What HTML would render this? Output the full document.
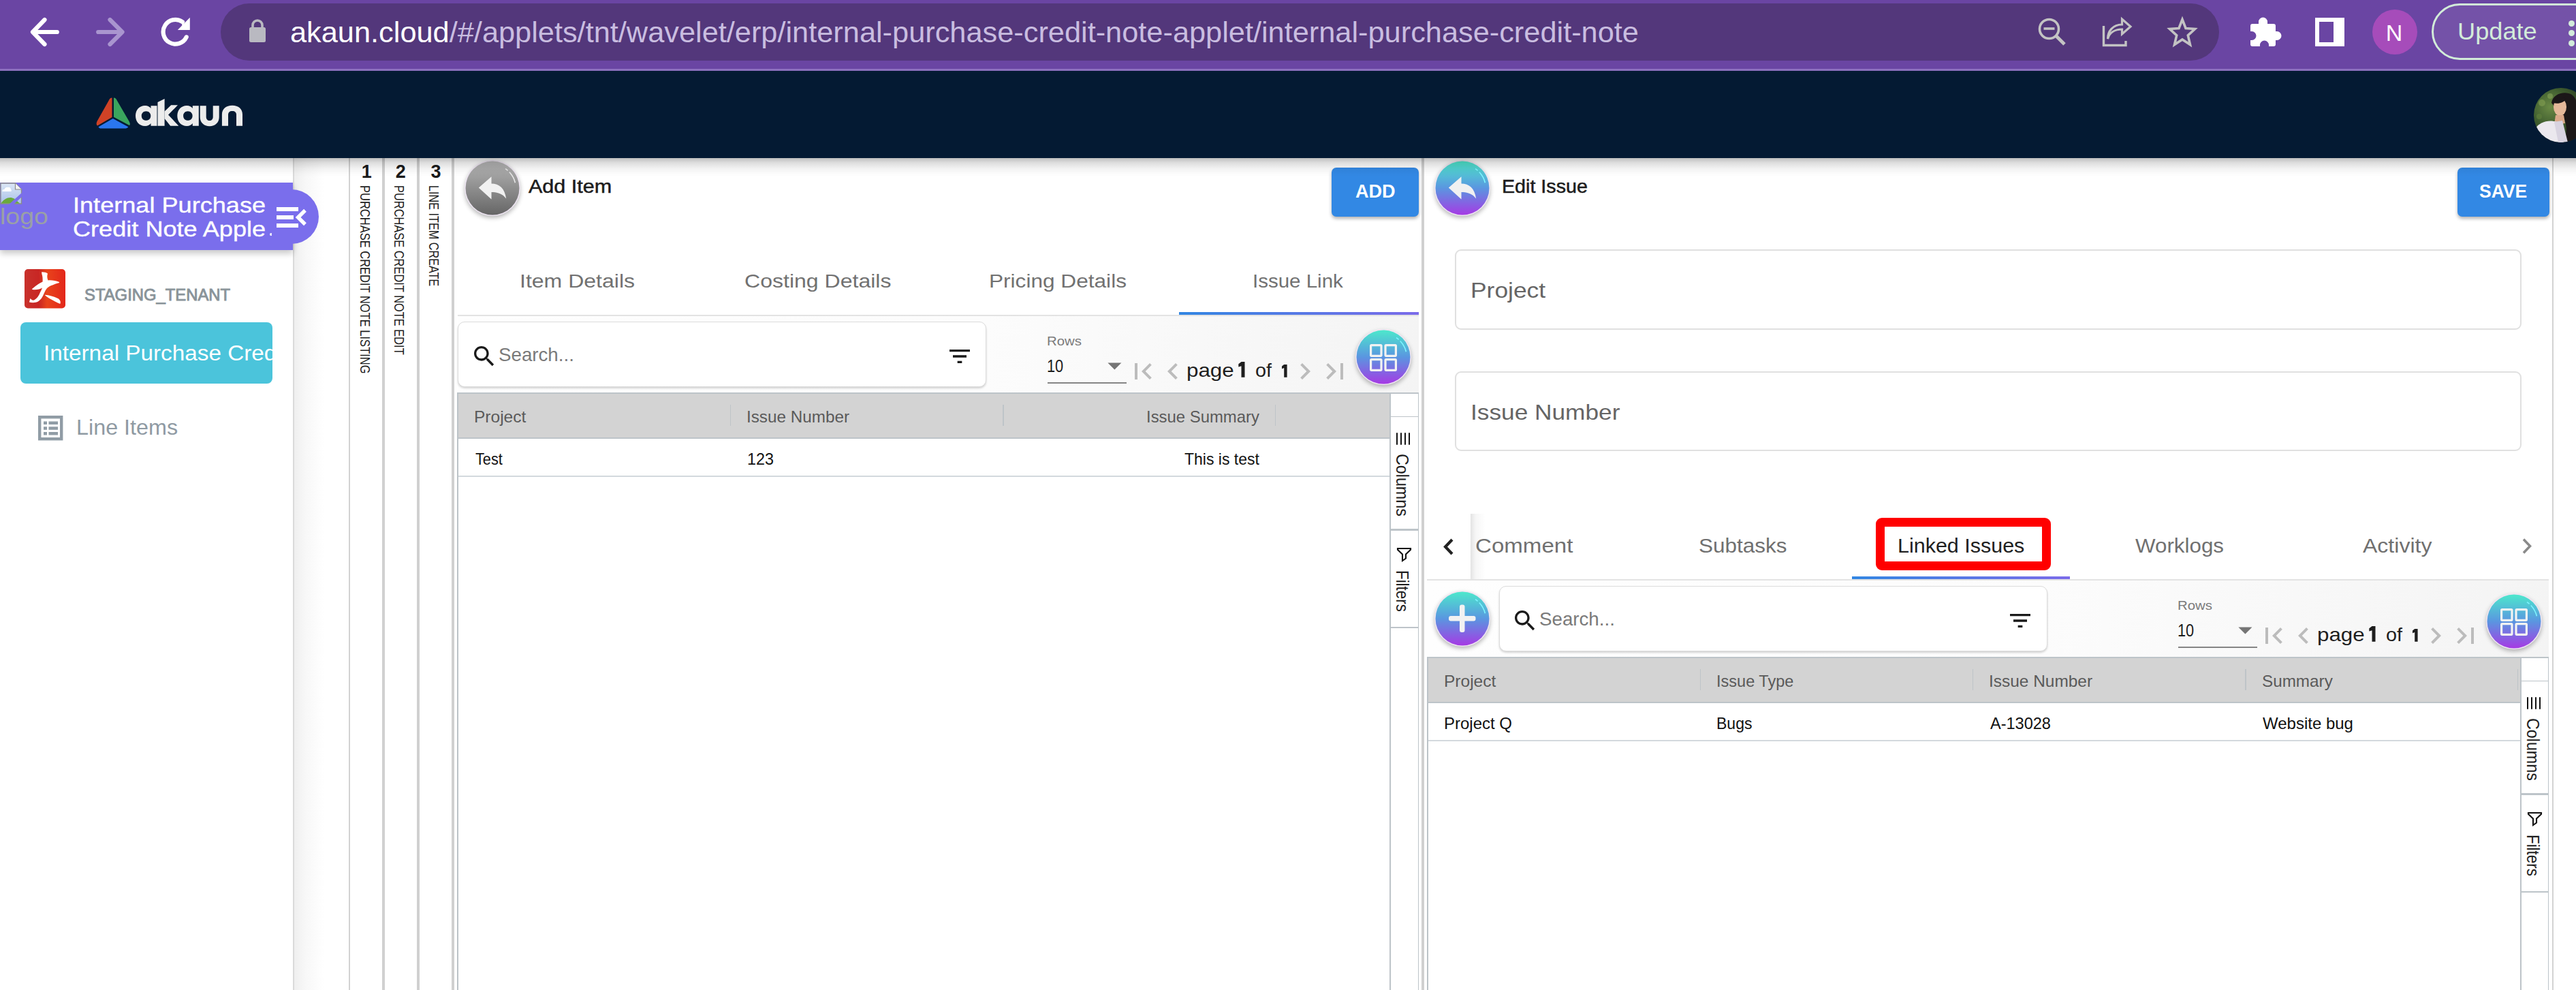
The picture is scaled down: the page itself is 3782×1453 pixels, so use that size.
<!DOCTYPE html>
<html><head><meta charset="utf-8"><title>akaun</title>
<style>
html,body{margin:0;padding:0;width:3782px;height:1453px;overflow:hidden;background:#fff;position:relative;font-family:"Liberation Sans",sans-serif}
.a{position:absolute;box-sizing:border-box}
.t{white-space:pre}
</style></head><body>
<div class="a " style="left:0px;top:0px;width:3782px;height:101px;background:#6a45a3"></div>
<div class="a " style="left:0px;top:101px;width:3782px;height:3px;background:#8c70be"></div>
<div class="a " style="left:324px;top:5px;width:2934px;height:84px;background:#53377b;border-radius:42px"></div>
<svg class="a" style="left:40px;top:22px;" width="52" height="50" viewBox="0 0 52 50"><path d="M43.8 25 H9 M25.5 7 L8 25 L25.5 43" fill="none" stroke="#fff" stroke-width="6.2" stroke-linecap="round" stroke-linejoin="round"/></svg>
<svg class="a" style="left:137px;top:22px;" width="52" height="50" viewBox="0 0 52 50"><path d="M7.2 25 H42 M24.5 7 L42.5 25 L24.5 43" fill="none" stroke="#a995cf" stroke-width="6.2" stroke-linecap="round" stroke-linejoin="round"/></svg>
<svg class="a" style="left:232px;top:22px;" width="52" height="50" viewBox="0 0 52 50"><path d="M36 10.2 A17.9 17.9 0 1 0 41.7 32.4" fill="none" stroke="#fff" stroke-width="6.2" stroke-linecap="round"/><path d="M46.8 3.8 V21.9 H28.8 Z" fill="#fff"/><path d="M34 8.5 L40 14.5 L36 18 Z" fill="#fff"/></svg>
<svg class="a" style="left:362px;top:26px;" width="32" height="40" viewBox="0 0 32 40"><path d="M9 15 V11 A7 7 0 0 1 23 11 V15" fill="none" stroke="#b9b9c1" stroke-width="3.6"/><rect x="4" y="14" width="24" height="22" rx="2.5" fill="#b9b9c1"/></svg>
<div class="a t" style="left:425.65px;top:25.59px;font-size:43.3px;line-height:43.3px;color:#c9bde0;font-weight:400;font-family:'Liberation Sans', sans-serif;transform:scaleX(1.0008);transform-origin:0 0;"><span style="color:#fff">akaun.cloud</span>/#/applets/tnt/wavelet/erp/internal-purchase-credit-note-applet/internal-purchase-credit-note</div>
<svg class="a" style="left:2991px;top:24.5px;" width="50" height="50" viewBox="0 0 50 50"><circle cx="17.5" cy="17.5" r="14" fill="none" stroke="#c3c3c3" stroke-width="3.6"/><path d="M9.5 17 H25.5" stroke="#c3c3c3" stroke-width="3.6"/><path d="M27.5 27.5 L40 40" stroke="#c3c3c3" stroke-width="5"/></svg>
<svg class="a" style="left:3084px;top:24px;" width="52" height="50" viewBox="0 0 52 50"><path d="M4.5 14 V42.5 H37 V36" fill="none" stroke="#c3c3c3" stroke-width="3.4"/><path d="M10.5 33 C13 24 21 19 31.5 19 V26 L44 15 L31.5 4 V12 C18 12 10.5 22 10.5 33 Z" fill="none" stroke="#c3c3c3" stroke-width="3.2" stroke-linejoin="miter"/></svg>
<svg class="a" style="left:3178px;top:22px;" width="52" height="52" viewBox="0 0 52 52"><path d="M26 6.5 L31 19.5 L44.5 20.5 L34.3 29.8 L37.5 43.5 L26 36 L14.5 43.5 L17.7 29.8 L7.5 20.5 L21 19.5 Z" fill="none" stroke="#c3c3c3" stroke-width="3.6" stroke-linejoin="miter"/></svg>
<svg class="a" style="left:3300px;top:20px;" width="52" height="52" viewBox="0 0 52 52"><path d="M4 18 C4 16 5 15 7 15 H16 V12 A6.5 6.5 0 0 1 29 12 V15 H38 C40 15 41 16 41 18 V26 H43 A6.5 6.5 0 0 1 43 39 H41 V45 C41 47 40 48 38 48 H31 V46 A6.5 6.5 0 0 0 18 46 V48 H7 C5 48 4 47 4 45 V39 H6 A6.5 6.5 0 0 0 6 26 H4 Z" fill="#fff"/></svg>
<div class="a " style="left:3399px;top:26px;width:43px;height:42px;background:#fff"></div>
<div class="a " style="left:3405px;top:32px;width:21px;height:30px;background:#6a45a3"></div>
<div class="a " style="left:3483px;top:14px;width:66px;height:66px;background:#a64cba;border-radius:50%"></div>
<div class="a t" style="left:3502.84px;top:30.60px;font-size:34px;line-height:34px;color:#ffffff;font-weight:400;font-family:'Liberation Sans', sans-serif;">N</div>
<div class="a " style="left:3570px;top:5px;width:260px;height:83px;background:#7452a8;border:3px solid #d2ecd9;border-radius:42px"></div>
<div class="a t" style="left:3608.34px;top:28.25px;font-size:35px;line-height:35px;color:#d3ecda;font-weight:400;font-family:'Liberation Sans', sans-serif;transform:scaleX(1.0343);transform-origin:0 0;">Update</div>
<div class="a " style="left:3771px;top:29.5px;width:9px;height:9px;background:#d3ecda;border-radius:50%"></div>
<div class="a " style="left:3771px;top:44.0px;width:9px;height:9px;background:#d3ecda;border-radius:50%"></div>
<div class="a " style="left:3771px;top:58.5px;width:9px;height:9px;background:#d3ecda;border-radius:50%"></div>
<div class="a " style="left:0px;top:104px;width:3782px;height:128px;background:#041a33"></div>
<svg class="a" style="left:138px;top:140px;" width="58" height="52" viewBox="0 0 58 52">
<path d="M26.5 3.5 C24 3.5 23 5 22 7 L4.5 38 C3 41 3.5 43.5 5 44.5 L26.5 32 Z" fill="#d04226"/>
<path d="M29 3.5 C31.5 3.5 32.5 5 33.5 7 L51.5 38 C53 41 53.5 43 52 44 L29 31.8 Z" fill="#3aa55e"/>
<path d="M27.8 34 L6.5 46.3 C7 48 8.5 48.6 11 48.6 H45 C47.5 48.6 49 48 50.3 46.2 Z" fill="#2a76ee"/>
</svg>
<svg class="a" style="left:196px;top:140px;" width="165" height="50" viewBox="0 0 165 50">
<g fill="#ececec">
<path d="M17 15 C8.5 15 3 21.5 3 30 C3 38.5 8.5 45 17 45 C21 45 24 43.2 25.5 41 V44.8 H34.5 V15.2 H25.5 V19 C24 16.8 21 15 17 15 Z M18.5 23.2 C22.5 23.2 25.3 26 25.3 30 C25.3 34 22.5 36.8 18.5 36.8 C14.5 36.8 11.8 34 11.8 30 C11.8 26 14.5 23.2 18.5 23.2 Z"/>
<path d="M35.5 10 L45.6 5 V44.8 H35.5 Z"/>
<path d="M45.6 23.5 L55.2 14.3 H65 L51 28.5 L66.3 44.8 H54.2 L45.6 34 Z"/>
<path transform="translate(6.3 0)" d="M72 15 C63.5 15 58 21.5 58 30 C58 38.5 63.5 45 72 45 C76 45 79 43.2 80.5 41 V44.8 H89.5 V15.2 H80.5 V19 C79 16.8 76 15 72 15 Z M73.5 23.2 C77.5 23.2 80.3 26 80.3 30 C80.3 34 77.5 36.8 73.5 36.8 C69.5 36.8 66.8 34 66.8 30 C66.8 26 69.5 23.2 73.5 23.2 Z"/>
<path transform="translate(6.2 0)" d="M91.5 15.2 H100.5 V31.5 C100.5 35 102.5 37 105.5 37 C108.5 37 110.5 35 110.5 31.5 V15.2 H119.5 V32 C119.5 40 113.5 45.2 105.5 45.2 C97.5 45.2 91.5 40 91.5 32 Z"/>
<path d="M129.9 44.8 V28 C129.9 20 136 14.8 145 14.8 C154 14.8 160 20 160 28 V44.8 H151 V28.5 C151 25 149 23 145 23 C141 23 139 25 139 28.5 V44.8 Z"/>
</g></svg>
<svg class="a" style="left:3720px;top:129px;" width="62" height="80" viewBox="0 0 62 80">
<defs><clipPath id="avc"><circle cx="40" cy="40" r="40"/></clipPath>
<radialGradient id="avbg" cx="0.3" cy="0.35" r="0.7"><stop offset="0" stop-color="#6b8a45"/><stop offset="0.5" stop-color="#3f5d2f"/><stop offset="1" stop-color="#26361f"/></radialGradient></defs>
<g clip-path="url(#avc)">
<rect x="0" y="0" width="80" height="80" fill="url(#avbg)"/>
<circle cx="12" cy="22" r="5" fill="#7d9a4e" opacity="0.7"/><circle cx="24" cy="12" r="4" fill="#86a356" opacity="0.6"/><circle cx="8" cy="42" r="4" fill="#5e7d3c" opacity="0.7"/>
<path d="M26 22 C28 8 46 4 56 10 C64 16 66 30 64 44 C64 60 70 70 74 80 H44 C50 66 48 52 44 44 Z" fill="#1b1718"/>
<ellipse cx="38.5" cy="28" rx="9.5" ry="13" fill="#e4b899"/>
<path d="M32 40 L44 40 L46 52 L30 54 Z" fill="#d9a889"/>
<path d="M2 60 C8 50 22 46 34 50 L44 80 H0 Z" fill="#ebe8ee"/>
<path d="M30 50 L42 48 L50 80 H36 Z" fill="#d8d3e0"/>
<path d="M28 22 C30 14 40 12 48 16 C44 22 36 24 28 22 Z" fill="#1b1718"/>
</g></svg>
<div class="a " style="left:0px;top:232px;width:431px;height:1221px;background:#fff"></div>
<div class="a " style="left:430px;top:232px;width:1.5px;height:1221px;background:#dadada"></div>
<div class="a " style="left:431.5px;top:232px;width:44px;height:1221px;background:linear-gradient(90deg,#efefef,#f8f8f8 40%,rgba(255,255,255,0))"></div>
<div class="a " style="left:0px;top:268px;width:430px;height:99px;background:#7a6eec;box-shadow:0 5px 9px rgba(0,0,0,0.22)"></div>
<div class="a " style="left:388px;top:277.5px;width:80px;height:80px;background:#7a6eec;border-radius:50%"></div>
<div class="a " style="left:0px;top:268px;width:430px;height:99px;background:#7a6eec"></div>
<svg class="a" style="left:0px;top:267px;" width="34" height="34" viewBox="0 0 34 34">
<defs><linearGradient id="bi" x1="0" y1="0" x2="0" y2="1"><stop offset="0" stop-color="#dbe6f6"/><stop offset="1" stop-color="#a9c1e8"/></linearGradient></defs>
<path d="M1 2 H22.5 L31.5 11 V32 H1 Z" fill="url(#bi)" stroke="#8a8a8a" stroke-width="1.3"/>
<path d="M22.5 2 V11 H31.5" fill="#f4f4f4" stroke="#8a8a8a" stroke-width="1.2"/>
<path d="M3.5 14 C3 12 4.5 10.5 6.5 11 C7 8.5 9.5 7 12 8 C13.5 7 16 8.5 16 11 C17 11.5 17 13.5 16 14 Z" fill="#fff"/>
<path d="M1.5 31.5 C5 26 10 23 15 23 C19 23 23 25.5 25 28 L29 31.5 Z" fill="#6aaa3c"/>
<path d="M13 33 L32 16 V22 L20 33 Z" fill="#7a6eec"/>
</svg>
<div class="a t" style="left:-0.34px;top:300.95px;font-size:33px;line-height:33px;color:#9aa0a6;font-weight:400;font-family:'Liberation Sans', sans-serif;transform:scaleX(1.1358);transform-origin:0 0;">logo</div>
<div class="a t" style="left:107.48px;top:284.80px;font-size:32px;line-height:32px;color:#ffffff;font-weight:400;font-family:'Liberation Sans', sans-serif;transform:scaleX(1.1287);transform-origin:0 0;-webkit-text-stroke:0.35px #fff;">Internal Purchase</div>
<div class="a t" style="left:107.48px;top:319.80px;font-size:32px;line-height:32px;color:#ffffff;font-weight:400;font-family:'Liberation Sans', sans-serif;transform:scaleX(1.1287);transform-origin:0 0;-webkit-text-stroke:0.35px #fff;">Credit Note Apple</div>
<div class="a" style="left:396px;top:341.5px;width:3px;height:4px;background:#fff;border-radius:50% 0 0 50%;opacity:.85"></div>
<div class="a " style="left:405.8px;top:304px;width:32.2px;height:5.6px;background:#fff"></div>
<div class="a " style="left:405.8px;top:316.3px;width:25px;height:5.6px;background:#fff"></div>
<div class="a " style="left:405.8px;top:328px;width:32.2px;height:5.6px;background:#fff"></div>
<svg class="a" style="left:430px;top:302px;" width="24" height="34" viewBox="0 0 24 34"><path d="M18 6.8 L7.6 17 L18 27.2" fill="none" stroke="#fff" stroke-width="5.4"/></svg>
<svg class="a" style="left:36px;top:395px;" width="60" height="58" viewBox="0 0 60 58">
<defs><linearGradient id="tl" x1="0" y1="0" x2="1" y2="0"><stop offset="0" stop-color="#c8312c"/><stop offset="0.35" stop-color="#c82624"/><stop offset="0.55" stop-color="#e8441c"/><stop offset="1" stop-color="#e3261a"/></linearGradient></defs>
<rect x="0" y="0" width="60" height="57.5" rx="5" fill="url(#tl)"/>
<path d="M25.1 4.4 C28.5 4.2 32 5 34 6.5 C33 9 33 13 34.5 16.5 C40 16 46 17 51 19 L51 20 C44 22 37 24.5 33.5 27.5 C31 30 30 33 28.5 36 C26.5 41 24 45 20 47.5 C16.5 49.5 11 49.5 7 48.5 C7.5 46 8 44.5 8.5 43 C10 45 12 46 14 45.5 C18 43.5 21 39 23 34 C24.5 31 25.5 29 26 27.5 C23 29.5 15 31.5 10.7 29.5 C14 26.5 20 21.5 26.6 18.5 C26.8 14 26.5 10 25.5 7.5 Z" fill="#fff"/><path d="M29.6 37.7 C36 38 45 40.5 50 43.5 C52.5 45.5 53.5 48.5 52.3 51 C48 49.5 42 46 36.5 43 C34 41.5 31.5 39.5 29.6 37.7 Z" fill="#fff"/>
</svg>
<div class="a t" style="left:124.25px;top:420.60px;font-size:24px;line-height:24px;color:#899399;font-weight:400;font-family:'Liberation Sans', sans-serif;transform:scaleX(0.9934);transform-origin:0 0;-webkit-text-stroke:0.9px #899399;">STAGING_TENANT</div>
<div class="a " style="left:30px;top:473px;width:370px;height:90px;background:#4bc4db;border-radius:8px;overflow:hidden"></div>
<div class="a" style="left:30px;top:473px;width:370px;height:90px;overflow:hidden">
<div class="a t" style="left:34.10px;top:29.65px;font-size:31px;line-height:31px;color:#ffffff;font-weight:400;font-family:'Liberation Sans', sans-serif;transform:scaleX(1.0740);transform-origin:0 0;">Internal Purchase Credit</div>
</div>
<svg class="a" style="left:56px;top:610px;" width="37" height="37" viewBox="0 0 37 37">
<rect x="2.2" y="2.2" width="32" height="32" fill="none" stroke="#909ca5" stroke-width="4.4"/>
<rect x="8" y="8.5" width="5" height="4.5" fill="#909ca5"/><rect x="15.5" y="8.5" width="13.5" height="4.5" fill="#909ca5"/>
<rect x="8" y="16.3" width="5" height="4.5" fill="#909ca5"/><rect x="15.5" y="16.3" width="13.5" height="4.5" fill="#909ca5"/>
<rect x="8" y="24" width="5" height="4.5" fill="#909ca5"/><rect x="15.5" y="24" width="13.5" height="4.5" fill="#909ca5"/>
</svg>
<div class="a t" style="left:112.47px;top:610.80px;font-size:32px;line-height:32px;color:#8f9aa3;font-weight:400;font-family:'Liberation Sans', sans-serif;transform:scaleX(1.0102);transform-origin:0 0;">Line Items</div>
<div class="a " style="left:512px;top:232px;width:2px;height:1221px;background:#d2d2d2"></div>
<div class="a " style="left:561px;top:232px;width:4px;height:1221px;background:#d0d0d0"></div>
<div class="a " style="left:612px;top:232px;width:4px;height:1221px;background:#d0d0d0"></div>
<div class="a " style="left:663px;top:232px;width:4px;height:1221px;background:#d0d0d0"></div>
<div class="a t" style="left:530.81px;top:239.05px;font-size:27px;line-height:27px;color:#1a1a1a;font-weight:700;font-family:'Liberation Sans', sans-serif;">1</div>
<div class="a t" style="left:580.86px;top:239.05px;font-size:27px;line-height:27px;color:#1a1a1a;font-weight:700;font-family:'Liberation Sans', sans-serif;">2</div>
<div class="a t" style="left:632.38px;top:239.05px;font-size:27px;line-height:27px;color:#1a1a1a;font-weight:700;font-family:'Liberation Sans', sans-serif;">3</div>
<div class="a t" style="left:528.60px;top:272.31px;font-size:20px;line-height:20px;color:#1e1e1e;font-weight:400;font-family:'Liberation Sans', sans-serif;transform-origin:0 17.00px;transform:translate(0,-17.00px) rotate(90deg) scaleX(0.8249);">PURCHASE CREDIT NOTE LISTING</div>
<div class="a t" style="left:579.20px;top:272.32px;font-size:20px;line-height:20px;color:#1e1e1e;font-weight:400;font-family:'Liberation Sans', sans-serif;transform-origin:0 17.00px;transform:translate(0,-17.00px) rotate(90deg) scaleX(0.8207);">PURCHASE CREDIT NOTE EDIT</div>
<div class="a t" style="left:630.00px;top:272.33px;font-size:20px;line-height:20px;color:#1e1e1e;font-weight:400;font-family:'Liberation Sans', sans-serif;transform-origin:0 17.00px;transform:translate(0,-17.00px) rotate(90deg) scaleX(0.8107);">LINE ITEM CREATE</div>
<div class="a " style="left:667px;top:232px;width:1420px;height:1221px;background:#fff"></div>
<div class="a " style="left:2087px;top:232px;width:4px;height:1221px;background:#d0d0d0"></div>
<div class="a" style="left:682px;top:235px;width:82px;height:82px;border-radius:50%;background:#efe6f3;box-shadow:0 3px 6px rgba(0,0,0,0.28)"></div>
<svg class="a" style="left:683px;top:236px;" width="80" height="80" viewBox="0 0 80 80"><defs><linearGradient id="gc1" x1="0" y1="0" x2="0" y2="1"><stop offset="0" stop-color="#b6b6b6"/><stop offset="1" stop-color="#666"/></linearGradient></defs>
<circle cx="40.0" cy="40.0" r="39.5" fill="url(#gc1)"/>
<path d="M59.0 11.7 A34.2 34.2 0 0 1 73.4 32.3" fill="none" stroke="#e6e6e6" stroke-width="1.6" stroke-dasharray="4.5 3 40"/>
<path d="M19.8 39.5 L38.5 23.3 V33.4 C50 33.6 58 40 60.2 55.6 C55 48.5 48 46 38.5 46 V56.6 Z" fill="#f1f1f1"/></svg>
<div class="a t" style="left:776.00px;top:261.05px;font-size:27px;line-height:27px;color:#1c1c1c;font-weight:400;font-family:'Liberation Sans', sans-serif;transform:scaleX(1.1298);transform-origin:0 0;-webkit-text-stroke:0.5px #1c1c1c;">Add Item</div>
<div class="a " style="left:1955px;top:246px;width:128px;height:72px;background:#3288e4;border-radius:7px;box-shadow:0 3px 5px rgba(0,0,0,0.3)"></div>
<div class="a t" style="left:1990.28px;top:267.20px;font-size:28px;line-height:28px;color:#ffffff;font-weight:700;font-family:'Liberation Sans', sans-serif;transform:scaleX(0.9670);transform-origin:0 0;">ADD</div>
<div class="a t" style="left:762.50px;top:399.20px;font-size:28px;line-height:28px;color:#717171;font-weight:400;font-family:'Liberation Sans', sans-serif;transform:scaleX(1.1433);transform-origin:0 0;">Item Details</div>
<div class="a t" style="left:1092.50px;top:399.20px;font-size:28px;line-height:28px;color:#717171;font-weight:400;font-family:'Liberation Sans', sans-serif;transform:scaleX(1.1445);transform-origin:0 0;">Costing Details</div>
<div class="a t" style="left:1451.53px;top:399.20px;font-size:28px;line-height:28px;color:#717171;font-weight:400;font-family:'Liberation Sans', sans-serif;transform:scaleX(1.1286);transform-origin:0 0;">Pricing Details</div>
<div class="a t" style="left:1838.69px;top:399.20px;font-size:28px;line-height:28px;color:#717171;font-weight:400;font-family:'Liberation Sans', sans-serif;transform:scaleX(1.0537);transform-origin:0 0;">Issue Link</div>
<div class="a " style="left:672px;top:462px;width:1411px;height:2px;background:#e3e3e3"></div>
<div class="a " style="left:1731px;top:458px;width:352px;height:4px;background:linear-gradient(90deg,#3286e2,#7b6be9)"></div>
<div class="a " style="left:672px;top:464px;width:1411px;height:112px;background:linear-gradient(90deg,#fefefe,#fcfcfc 55%,#f4f4f4)"></div>
<div class="a " style="left:672px;top:472px;width:776px;height:96px;background:#fff;border:1.5px solid #dcdcdc;border-radius:10px;box-shadow:0 2px 3px rgba(0,0,0,0.17)"></div>
<svg class="a" style="left:691px;top:503px;" width="40" height="40" viewBox="0 0 24 24"><path d="M15.5 14h-.79l-.28-.27C15.41 12.59 16 11.11 16 9.5 16 5.910 13.09 3 9.5 3S3 5.91 3 9.5 5.91 16 9.5 16c1.61 0 3.09-.59 4.23-1.57l.27.28v.79l5 4.99L20.49 19l-4.99-5zm-6 0C7.01 14 5 11.99 5 9.5S7.01 5 9.5 5 14 7.01 14 9.5 11.99 14 9.5 14z" fill="#1a1a1a"/></svg>
<div class="a t" style="left:731.63px;top:507.20px;font-size:28px;line-height:28px;color:#7a7a7a;font-weight:400;font-family:'Liberation Sans', sans-serif;transform:scaleX(0.9894);transform-origin:0 0;">Search...</div>
<svg class="a" style="left:1388.5px;top:503px;" width="40" height="40" viewBox="0 0 24 24"><path d="M10 18h4v-2h-4v2zM3 6v2h18V6H3zm3 7h12v-2H6v2z" fill="#1a1a1a"/></svg>
<div class="a t" style="left:1537.31px;top:490.65px;font-size:19px;line-height:19px;color:#7b7b7b;font-weight:400;font-family:'Liberation Sans', sans-serif;transform:scaleX(1.0742);transform-origin:0 0;">Rows</div>
<div class="a t" style="left:1537.24px;top:523.50px;font-size:26px;line-height:26px;color:#1c1c1c;font-weight:400;font-family:'Liberation Sans', sans-serif;transform:scaleX(0.8369);transform-origin:0 0;">10</div>
<svg class="a" style="left:1626px;top:531.5px;" width="21" height="11" viewBox="0 0 21 11"><path d="M0.4 0.5 H20.4 L10.4 10.6 Z" fill="#757575"/></svg>
<div class="a " style="left:1538px;top:561px;width:116px;height:2px;background:#858585"></div>
<svg class="a" style="left:1653.8px;top:521px;" width="48" height="48" viewBox="0 0 24 24"><path d="M18.41 16.59L13.82 12l4.59-4.59L17 6l-6 6 6 6zM6 6h2v12H6z" fill="#bcbcbc"/></svg>
<svg class="a" style="left:1698.4px;top:521px;" width="48" height="48" viewBox="0 0 24 24"><path d="M15.41 7.41L14 6l-6 6 6 6 1.41-1.41L10.83 12z" fill="#bcbcbc"/></svg>
<div class="a t" style="left:1741.54px;top:529.38px;font-size:28.5px;line-height:28.5px;color:#1e1e1e;font-weight:400;font-family:'Liberation Sans', sans-serif;transform:scaleX(1.0998);transform-origin:0 0;">page</div>
<svg class="a" style="left:1816px;top:529px;" width="14" height="27" viewBox="0 0 14 27"><path d="M6.5 2 H11.5 V24.8 H6.5 V8.2 L2.3 9.6 V5.2 Z" fill="#1e1e1e"/></svg>
<div class="a t" style="left:1842.90px;top:529.38px;font-size:28.5px;line-height:28.5px;color:#1e1e1e;font-weight:400;font-family:'Liberation Sans', sans-serif;transform:scaleX(1.0098);transform-origin:0 0;">of</div>
<svg class="a" style="left:1880px;top:533px;" width="12" height="23" viewBox="0 0 12 23"><path d="M5.2 2 H9.6 V20.8 H5.2 V7 L2 8.2 V4.5 Z" fill="#1e1e1e"/></svg>
<svg class="a" style="left:1891.8px;top:521px;" width="48" height="48" viewBox="0 0 24 24"><path d="M10 6L8.59 7.41 13.17 12l-4.58 4.59L10 18l6-6z" fill="#bcbcbc"/></svg>
<svg class="a" style="left:1935.8px;top:521px;" width="48" height="48" viewBox="0 0 24 24"><path d="M5.59 7.41L10.18 12l-4.59 4.59L7 18l6-6-6-6zM16 6h2v12h-2z" fill="#bcbcbc"/></svg>
<div class="a" style="left:1990px;top:483.4px;width:82px;height:82px;border-radius:50%;background:#efe6f3;box-shadow:0 3px 6px rgba(0,0,0,0.28)"></div>
<svg class="a" style="left:1991px;top:484.4px;" width="80" height="80" viewBox="0 0 80 80"><defs><linearGradient id="gc2" x1="0" y1="0" x2="0" y2="1"><stop offset="0" stop-color="#4de8cc"/><stop offset="0.5" stop-color="#5a96e0"/><stop offset="1" stop-color="#a63ae4"/></linearGradient></defs>
<circle cx="40.0" cy="40.0" r="39.5" fill="url(#gc2)"/>
<path d="M59.0 11.7 A34.2 34.2 0 0 1 73.4 32.3" fill="none" stroke="#7ff4ff" stroke-width="1.6" stroke-dasharray="4.5 3 40"/>
<rect x="21.6" y="22.6" width="15.4" height="15.7" rx="1" fill="none" stroke="#f2f2f2" stroke-width="3.2"/><rect x="43.0" y="22.6" width="15.4" height="15.7" rx="1" fill="none" stroke="#f2f2f2" stroke-width="3.2"/><rect x="21.6" y="43.6" width="15.4" height="15.7" rx="1" fill="none" stroke="#f2f2f2" stroke-width="3.2"/><rect x="43.0" y="43.6" width="15.4" height="15.7" rx="1" fill="none" stroke="#f2f2f2" stroke-width="3.2"/></svg>
<div class="a " style="left:671px;top:576px;width:2px;height:877px;background:#bcc3c8"></div>
<div class="a " style="left:673px;top:576px;width:1410px;height:2px;background:#bdc4c9"></div>
<div class="a " style="left:673px;top:578px;width:1367px;height:65px;background:#d3d3d3"></div>
<div class="a " style="left:673px;top:642px;width:1367px;height:2px;background:#bdc4c9"></div>
<div class="a " style="left:673px;top:698px;width:1367px;height:1.5px;background:#d3d9dd"></div>
<div class="a " style="left:1071.5px;top:594px;width:1.5px;height:31px;background:#bec4c8"></div>
<div class="a " style="left:1472px;top:594px;width:1.5px;height:31px;background:#bec4c8"></div>
<div class="a " style="left:1871.5px;top:594px;width:1.5px;height:31px;background:#bec4c8"></div>
<div class="a t" style="left:696.08px;top:599.60px;font-size:24px;line-height:24px;color:#5a5a5a;font-weight:400;font-family:'Liberation Sans', sans-serif;transform:scaleX(1.0219);transform-origin:0 0;">Project</div>
<div class="a t" style="left:1096.10px;top:599.60px;font-size:24px;line-height:24px;color:#5a5a5a;font-weight:400;font-family:'Liberation Sans', sans-serif;transform:scaleX(1.0109);transform-origin:0 0;">Issue Number</div>
<div class="a t" style="left:1682.63px;top:599.60px;font-size:24px;line-height:24px;color:#5a5a5a;font-weight:400;font-family:'Liberation Sans', sans-serif;transform:scaleX(0.9949);transform-origin:0 0;">Issue Summary</div>
<div class="a t" style="left:697.66px;top:661.60px;font-size:24px;line-height:24px;color:#111;font-weight:400;font-family:'Liberation Sans', sans-serif;transform:scaleX(0.9057);transform-origin:0 0;">Test</div>
<div class="a t" style="left:1096.54px;top:661.60px;font-size:24px;line-height:24px;color:#111;font-weight:400;font-family:'Liberation Sans', sans-serif;transform:scaleX(0.9715);transform-origin:0 0;">123</div>
<div class="a t" style="left:1738.64px;top:661.60px;font-size:24px;line-height:24px;color:#111;font-weight:400;font-family:'Liberation Sans', sans-serif;transform:scaleX(0.9581);transform-origin:0 0;">This is test</div>
<div class="a " style="left:2040px;top:576px;width:1.5px;height:877px;background:#bdc4c9"></div>
<div class="a " style="left:2081.5px;top:576px;width:1.5px;height:877px;background:#bdc4c9"></div>
<div class="a " style="left:2040px;top:610.5px;width:43px;height:1.5px;background:#bdc4c9"></div>
<div class="a " style="left:2040px;top:776px;width:43px;height:2.5px;background:#bdc4c9"></div>
<div class="a " style="left:2040px;top:920px;width:43px;height:1.5px;background:#bdc4c9"></div>
<div class="a " style="left:2050.3px;top:635px;width:2.1px;height:18px;background:#111;border-radius:1px"></div>
<div class="a " style="left:2056.3px;top:635px;width:2.1px;height:18px;background:#111;border-radius:1px"></div>
<div class="a " style="left:2062.3px;top:635px;width:2.1px;height:18px;background:#111;border-radius:1px"></div>
<div class="a " style="left:2068.3px;top:635px;width:2.1px;height:18px;background:#111;border-radius:1px"></div>
<div class="a t" style="left:2050.00px;top:665.61px;font-size:25px;line-height:25px;color:#1e1e1e;font-weight:400;font-family:'Liberation Sans', sans-serif;transform-origin:0 21.25px;transform:translate(0,-21.25px) rotate(90deg) scaleX(0.9308);">Columns</div>
<svg class="a" style="left:2050px;top:803px;" width="24" height="24" viewBox="0 0 24 24"><path d="M2 2 H21 V3.8 L14 10.5 V16.5 L9 20 V10.5 L2 3.8 Z" fill="none" stroke="#111" stroke-width="2.1" stroke-linejoin="miter"/></svg>
<div class="a t" style="left:2050.00px;top:836.55px;font-size:25px;line-height:25px;color:#1e1e1e;font-weight:400;font-family:'Liberation Sans', sans-serif;transform-origin:0 21.25px;transform:translate(0,-21.25px) rotate(90deg) scaleX(0.8941);">Filters</div>
<div class="a " style="left:2091px;top:232px;width:1657px;height:1221px;background:#fff"></div>
<div class="a " style="left:3747px;top:232px;width:2px;height:1221px;background:#d3d3d3"></div>
<div class="a" style="left:2106px;top:235px;width:82px;height:82px;border-radius:50%;background:#efe6f3;box-shadow:0 3px 6px rgba(0,0,0,0.28)"></div>
<svg class="a" style="left:2107px;top:236px;" width="80" height="80" viewBox="0 0 80 80"><defs><linearGradient id="gc3" x1="0" y1="0" x2="0" y2="1"><stop offset="0" stop-color="#4de8cc"/><stop offset="0.5" stop-color="#5a96e0"/><stop offset="1" stop-color="#a63ae4"/></linearGradient></defs>
<circle cx="40.0" cy="40.0" r="39.5" fill="url(#gc3)"/>
<path d="M59.0 11.7 A34.2 34.2 0 0 1 73.4 32.3" fill="none" stroke="#7ff4ff" stroke-width="1.6" stroke-dasharray="4.5 3 40"/>
<path d="M19.8 39.5 L38.5 23.3 V33.4 C50 33.6 58 40 60.2 55.6 C55 48.5 48 46 38.5 46 V56.6 Z" fill="#f1f1f1"/></svg>
<div class="a t" style="left:2205.26px;top:261.05px;font-size:27px;line-height:27px;color:#1c1c1c;font-weight:400;font-family:'Liberation Sans', sans-serif;transform:scaleX(1.0619);transform-origin:0 0;-webkit-text-stroke:0.5px #1c1c1c;">Edit Issue</div>
<div class="a " style="left:3608px;top:246px;width:135px;height:72px;background:#3288e4;border-radius:7px;box-shadow:0 3px 5px rgba(0,0,0,0.3)"></div>
<div class="a t" style="left:3640.09px;top:267.20px;font-size:28px;line-height:28px;color:#ffffff;font-weight:700;font-family:'Liberation Sans', sans-serif;transform:scaleX(0.9453);transform-origin:0 0;">SAVE</div>
<div class="a " style="left:2136px;top:366px;width:1566px;height:118px;border:2px solid #e0e0e0;border-radius:9px;background:#fff"></div>
<div class="a t" style="left:2158.74px;top:410.30px;font-size:32px;line-height:32px;color:#656565;font-weight:400;font-family:'Liberation Sans', sans-serif;transform:scaleX(1.1059);transform-origin:0 0;">Project</div>
<div class="a " style="left:2136px;top:545px;width:1566px;height:117px;border:2px solid #e0e0e0;border-radius:9px;background:#fff"></div>
<div class="a t" style="left:2158.75px;top:589.00px;font-size:32px;line-height:32px;color:#656565;font-weight:400;font-family:'Liberation Sans', sans-serif;transform:scaleX(1.1016);transform-origin:0 0;">Issue Number</div>
<svg class="a" style="left:2115px;top:789px;" width="24" height="28" viewBox="0 0 24 28"><path d="M17 3 L7 13.5 L17 24" fill="none" stroke="#222" stroke-width="4.2"/></svg>
<div class="a " style="left:2159px;top:754px;width:22px;height:96px;background:linear-gradient(90deg,rgba(0,0,0,0.11),rgba(0,0,0,0.035) 35%,rgba(0,0,0,0))"></div>
<div class="a t" style="left:2166.45px;top:786.85px;font-size:29px;line-height:29px;color:#707070;font-weight:400;font-family:'Liberation Sans', sans-serif;transform:scaleX(1.1411);transform-origin:0 0;">Comment</div>
<div class="a t" style="left:2494.02px;top:786.85px;font-size:29px;line-height:29px;color:#707070;font-weight:400;font-family:'Liberation Sans', sans-serif;transform:scaleX(1.0854);transform-origin:0 0;">Subtasks</div>
<div class="a " style="left:2754px;top:760px;width:257px;height:77px;border:13.5px solid #ff0000;border-radius:9px"></div>
<div class="a t" style="left:2785.62px;top:786.85px;font-size:29px;line-height:29px;color:#202020;font-weight:400;font-family:'Liberation Sans', sans-serif;transform:scaleX(1.0508);transform-origin:0 0;">Linked Issues</div>
<div class="a t" style="left:3134.70px;top:786.85px;font-size:29px;line-height:29px;color:#707070;font-weight:400;font-family:'Liberation Sans', sans-serif;transform:scaleX(1.0802);transform-origin:0 0;">Worklogs</div>
<div class="a t" style="left:3468.60px;top:786.85px;font-size:29px;line-height:29px;color:#707070;font-weight:400;font-family:'Liberation Sans', sans-serif;transform:scaleX(1.1041);transform-origin:0 0;">Activity</div>
<svg class="a" style="left:3698px;top:788px;" width="24" height="28" viewBox="0 0 24 28"><path d="M7 3.5 L16.5 13.5 L7 23.5" fill="none" stroke="#8a8a8a" stroke-width="3.6"/></svg>
<div class="a " style="left:2095px;top:850px;width:1647px;height:2px;background:#e3e3e3"></div>
<div class="a " style="left:2719px;top:846px;width:320px;height:4px;background:linear-gradient(90deg,#3286e2,#7b6be9)"></div>
<div class="a " style="left:2095px;top:852px;width:1647px;height:112px;background:linear-gradient(90deg,#fefefe,#fcfcfc 55%,#f4f4f4)"></div>
<div class="a" style="left:2106px;top:867px;width:82px;height:82px;border-radius:50%;background:#efe6f3;box-shadow:0 3px 6px rgba(0,0,0,0.28)"></div>
<svg class="a" style="left:2107px;top:868px;" width="80" height="80" viewBox="0 0 80 80"><defs><linearGradient id="gc4" x1="0" y1="0" x2="0" y2="1"><stop offset="0" stop-color="#4de8cc"/><stop offset="0.5" stop-color="#5a96e0"/><stop offset="1" stop-color="#a63ae4"/></linearGradient></defs>
<circle cx="40.0" cy="40.0" r="39.5" fill="url(#gc4)"/>
<path d="M59.0 11.7 A34.2 34.2 0 0 1 73.4 32.3" fill="none" stroke="#7ff4ff" stroke-width="1.6" stroke-dasharray="4.5 3 40"/>
<rect x="20" y="36" width="39.5" height="7.5" rx="3" fill="#f2f2f2"/><rect x="36" y="19.5" width="7.5" height="40.5" rx="3" fill="#f2f2f2"/></svg>
<div class="a " style="left:2200.5px;top:860px;width:805px;height:96px;background:#fff;border:1.5px solid #dcdcdc;border-radius:10px;box-shadow:0 2px 3px rgba(0,0,0,0.17)"></div>
<svg class="a" style="left:2219px;top:891px;" width="40" height="40" viewBox="0 0 24 24"><path d="M15.5 14h-.79l-.28-.27C15.41 12.59 16 11.11 16 9.5 16 5.910 13.09 3 9.5 3S3 5.91 3 9.5 5.91 16 9.5 16c1.61 0 3.09-.59 4.23-1.57l.27.28v.79l5 4.99L20.49 19l-4.99-5zm-6 0C7.01 14 5 11.99 5 9.5S7.01 5 9.5 5 14 7.01 14 9.5 11.99 14 9.5 14z" fill="#1a1a1a"/></svg>
<div class="a t" style="left:2259.73px;top:894.60px;font-size:28px;line-height:28px;color:#7a7a7a;font-weight:400;font-family:'Liberation Sans', sans-serif;transform:scaleX(0.9894);transform-origin:0 0;">Search...</div>
<svg class="a" style="left:2945.5px;top:891px;" width="40" height="40" viewBox="0 0 24 24"><path d="M10 18h4v-2h-4v2zM3 6v2h18V6H3zm3 7h12v-2H6v2z" fill="#1a1a1a"/></svg>
<div class="a t" style="left:3197.31px;top:878.65px;font-size:19px;line-height:19px;color:#7b7b7b;font-weight:400;font-family:'Liberation Sans', sans-serif;transform:scaleX(1.0742);transform-origin:0 0;">Rows</div>
<div class="a t" style="left:3197.24px;top:911.50px;font-size:26px;line-height:26px;color:#1c1c1c;font-weight:400;font-family:'Liberation Sans', sans-serif;transform:scaleX(0.8369);transform-origin:0 0;">10</div>
<svg class="a" style="left:3286px;top:919.5px;" width="21" height="11" viewBox="0 0 21 11"><path d="M0.4 0.5 H20.4 L10.4 10.6 Z" fill="#757575"/></svg>
<div class="a " style="left:3198px;top:949px;width:116px;height:2px;background:#858585"></div>
<svg class="a" style="left:3313.8px;top:909px;" width="48" height="48" viewBox="0 0 24 24"><path d="M18.41 16.59L13.82 12l4.59-4.59L17 6l-6 6 6 6zM6 6h2v12H6z" fill="#bcbcbc"/></svg>
<svg class="a" style="left:3358.4px;top:909px;" width="48" height="48" viewBox="0 0 24 24"><path d="M15.41 7.41L14 6l-6 6 6 6 1.41-1.41L10.83 12z" fill="#bcbcbc"/></svg>
<div class="a t" style="left:3401.54px;top:917.38px;font-size:28.5px;line-height:28.5px;color:#1e1e1e;font-weight:400;font-family:'Liberation Sans', sans-serif;transform:scaleX(1.0998);transform-origin:0 0;">page</div>
<svg class="a" style="left:3476px;top:917px;" width="14" height="27" viewBox="0 0 14 27"><path d="M6.5 2 H11.5 V24.8 H6.5 V8.2 L2.3 9.6 V5.2 Z" fill="#1e1e1e"/></svg>
<div class="a t" style="left:3502.90px;top:917.38px;font-size:28.5px;line-height:28.5px;color:#1e1e1e;font-weight:400;font-family:'Liberation Sans', sans-serif;transform:scaleX(1.0098);transform-origin:0 0;">of</div>
<svg class="a" style="left:3540px;top:921px;" width="12" height="23" viewBox="0 0 12 23"><path d="M5.2 2 H9.6 V20.8 H5.2 V7 L2 8.2 V4.5 Z" fill="#1e1e1e"/></svg>
<svg class="a" style="left:3551.8px;top:909px;" width="48" height="48" viewBox="0 0 24 24"><path d="M10 6L8.59 7.41 13.17 12l-4.58 4.59L10 18l6-6z" fill="#bcbcbc"/></svg>
<svg class="a" style="left:3595.8px;top:909px;" width="48" height="48" viewBox="0 0 24 24"><path d="M5.59 7.41L10.18 12l-4.59 4.59L7 18l6-6-6-6zM16 6h2v12h-2z" fill="#bcbcbc"/></svg>
<div class="a" style="left:3650px;top:871.4px;width:82px;height:82px;border-radius:50%;background:#efe6f3;box-shadow:0 3px 6px rgba(0,0,0,0.28)"></div>
<svg class="a" style="left:3651px;top:872.4px;" width="80" height="80" viewBox="0 0 80 80"><defs><linearGradient id="gc5" x1="0" y1="0" x2="0" y2="1"><stop offset="0" stop-color="#4de8cc"/><stop offset="0.5" stop-color="#5a96e0"/><stop offset="1" stop-color="#a63ae4"/></linearGradient></defs>
<circle cx="40.0" cy="40.0" r="39.5" fill="url(#gc5)"/>
<path d="M59.0 11.7 A34.2 34.2 0 0 1 73.4 32.3" fill="none" stroke="#7ff4ff" stroke-width="1.6" stroke-dasharray="4.5 3 40"/>
<rect x="21.6" y="22.6" width="15.4" height="15.7" rx="1" fill="none" stroke="#f2f2f2" stroke-width="3.2"/><rect x="43.0" y="22.6" width="15.4" height="15.7" rx="1" fill="none" stroke="#f2f2f2" stroke-width="3.2"/><rect x="21.6" y="43.6" width="15.4" height="15.7" rx="1" fill="none" stroke="#f2f2f2" stroke-width="3.2"/><rect x="43.0" y="43.6" width="15.4" height="15.7" rx="1" fill="none" stroke="#f2f2f2" stroke-width="3.2"/></svg>
<div class="a " style="left:2095px;top:964px;width:2px;height:489px;background:#bcc3c8"></div>
<div class="a " style="left:2097px;top:964px;width:1645px;height:2px;background:#bdc4c9"></div>
<div class="a " style="left:2097px;top:966px;width:1603px;height:65px;background:#d3d3d3"></div>
<div class="a " style="left:2097px;top:1030px;width:1603px;height:2px;background:#bdc4c9"></div>
<div class="a " style="left:2097px;top:1086px;width:1603px;height:1.5px;background:#d3d9dd"></div>
<div class="a " style="left:2495.8px;top:982px;width:1.5px;height:31px;background:#bec4c8"></div>
<div class="a " style="left:2895.7px;top:982px;width:1.5px;height:31px;background:#bec4c8"></div>
<div class="a " style="left:3296px;top:982px;width:1.5px;height:31px;background:#bec4c8"></div>
<div class="a " style="left:3695.7px;top:982px;width:1.5px;height:31px;background:#bec4c8"></div>
<div class="a t" style="left:2120.08px;top:987.60px;font-size:24px;line-height:24px;color:#5a5a5a;font-weight:400;font-family:'Liberation Sans', sans-serif;transform:scaleX(1.0219);transform-origin:0 0;">Project</div>
<div class="a t" style="left:2520.16px;top:987.60px;font-size:24px;line-height:24px;color:#5a5a5a;font-weight:400;font-family:'Liberation Sans', sans-serif;transform:scaleX(0.9804);transform-origin:0 0;">Issue Type</div>
<div class="a t" style="left:2920.09px;top:987.60px;font-size:24px;line-height:24px;color:#5a5a5a;font-weight:400;font-family:'Liberation Sans', sans-serif;transform:scaleX(1.0176);transform-origin:0 0;">Issue Number</div>
<div class="a t" style="left:3321.24px;top:987.60px;font-size:24px;line-height:24px;color:#5a5a5a;font-weight:400;font-family:'Liberation Sans', sans-serif;transform:scaleX(1.0105);transform-origin:0 0;">Summary</div>
<div class="a t" style="left:2120.13px;top:1049.60px;font-size:24px;line-height:24px;color:#111;font-weight:400;font-family:'Liberation Sans', sans-serif;transform:scaleX(0.9988);transform-origin:0 0;">Project Q</div>
<div class="a t" style="left:2520.20px;top:1049.60px;font-size:24px;line-height:24px;color:#111;font-weight:400;font-family:'Liberation Sans', sans-serif;transform:scaleX(0.9601);transform-origin:0 0;">Bugs</div>
<div class="a t" style="left:2922.00px;top:1049.60px;font-size:24px;line-height:24px;color:#111;font-weight:400;font-family:'Liberation Sans', sans-serif;transform:scaleX(0.9803);transform-origin:0 0;">A-13028</div>
<div class="a t" style="left:3322.00px;top:1049.60px;font-size:24px;line-height:24px;color:#111;font-weight:400;font-family:'Liberation Sans', sans-serif;transform:scaleX(0.9998);transform-origin:0 0;">Website bug</div>
<div class="a " style="left:3700px;top:964px;width:1.5px;height:489px;background:#bdc4c9"></div>
<div class="a " style="left:3740.5px;top:964px;width:1.5px;height:489px;background:#bdc4c9"></div>
<div class="a " style="left:3700px;top:998.5px;width:42px;height:1.5px;background:#bdc4c9"></div>
<div class="a " style="left:3700px;top:1164px;width:42px;height:2.5px;background:#bdc4c9"></div>
<div class="a " style="left:3700px;top:1308px;width:42px;height:1.5px;background:#bdc4c9"></div>
<div class="a " style="left:3710.3px;top:1023px;width:2.1px;height:18px;background:#111;border-radius:1px"></div>
<div class="a " style="left:3716.3px;top:1023px;width:2.1px;height:18px;background:#111;border-radius:1px"></div>
<div class="a " style="left:3722.3px;top:1023px;width:2.1px;height:18px;background:#111;border-radius:1px"></div>
<div class="a " style="left:3728.3px;top:1023px;width:2.1px;height:18px;background:#111;border-radius:1px"></div>
<div class="a t" style="left:3710.00px;top:1053.61px;font-size:25px;line-height:25px;color:#1e1e1e;font-weight:400;font-family:'Liberation Sans', sans-serif;transform-origin:0 21.25px;transform:translate(0,-21.25px) rotate(90deg) scaleX(0.9308);">Columns</div>
<svg class="a" style="left:3710px;top:1191px;" width="24" height="24" viewBox="0 0 24 24"><path d="M2 2 H21 V3.8 L14 10.5 V16.5 L9 20 V10.5 L2 3.8 Z" fill="none" stroke="#111" stroke-width="2.1" stroke-linejoin="miter"/></svg>
<div class="a t" style="left:3710.00px;top:1224.55px;font-size:25px;line-height:25px;color:#1e1e1e;font-weight:400;font-family:'Liberation Sans', sans-serif;transform-origin:0 21.25px;transform:translate(0,-21.25px) rotate(90deg) scaleX(0.8941);">Filters</div>
<div class="a " style="left:0px;top:232px;width:3782px;height:28px;background:linear-gradient(rgba(0,0,0,0.25),rgba(0,0,0,0.13) 25%,rgba(0,0,0,0.05) 55%,rgba(0,0,0,0.015) 80%,rgba(0,0,0,0))"></div>
</body></html>
